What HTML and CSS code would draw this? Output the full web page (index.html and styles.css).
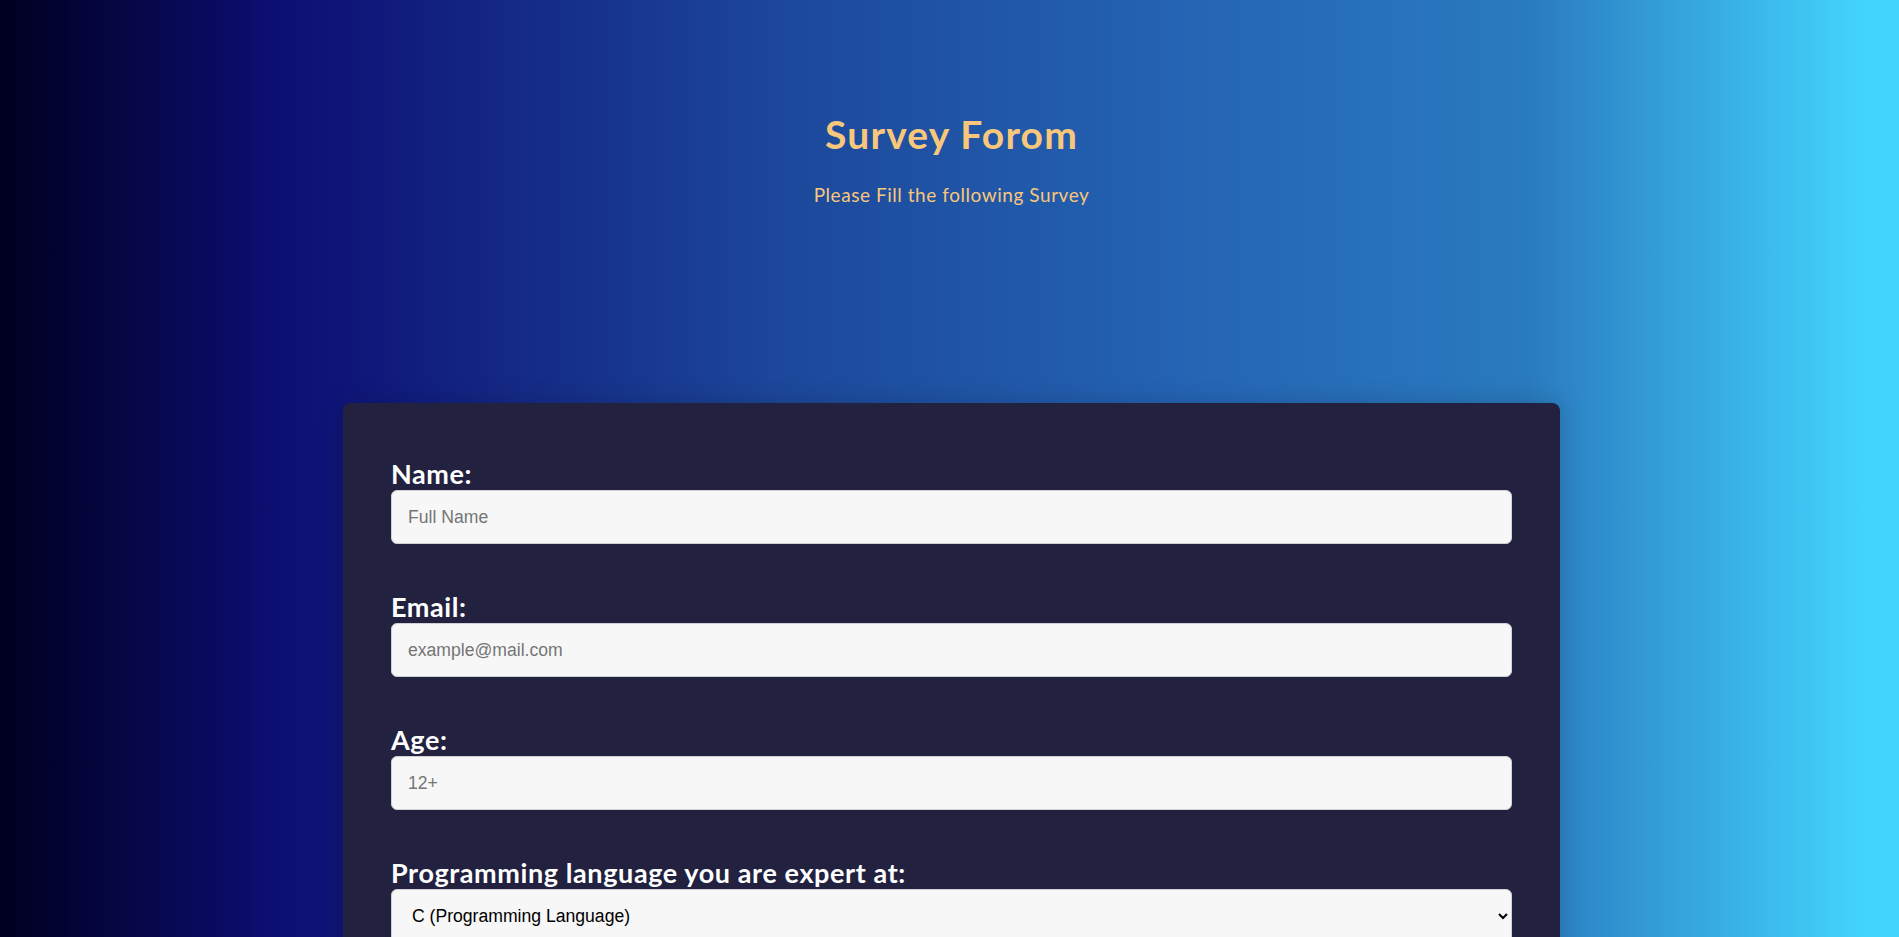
FILE: index.html
```html
<!DOCTYPE html>
<html lang="en">
<head>
<meta charset="utf-8">
<title>Survey Forom</title>
<link rel="stylesheet" href="styles.css">
</head>
<body>
<div class="page">
  <header class="header">
    <h1 class="title" id="title">Survey Forom</h1>
    <p class="description" id="description">Please Fill the following Survey</p>
  </header>
  <form class="card" id="survey-form">
    <div class="group">
      <label class="label" for="name">Name:</label>
      <input class="field" id="name" type="text" placeholder="Full Name">
    </div>
    <div class="group">
      <label class="label" for="email">Email:</label>
      <input class="field" id="email" type="email" placeholder="example@mail.com">
    </div>
    <div class="group">
      <label class="label" for="number">Age:</label>
      <input class="field" id="number" type="number" placeholder="12+">
    </div>
    <div class="group">
      <label class="label" for="dropdown">Programming language you are expert at:</label>
      <select class="field select" id="dropdown">
        <option>C (Programming Language)</option>
        <option>C++</option>
        <option>Java</option>
        <option>Python</option>
        <option>JavaScript</option>
      </select>
    </div>
  </form>
</div>
</body>
</html>
```

FILE: styles.css
```css
* {
  box-sizing: border-box;
}

html, body {
  margin: 0;
  padding: 0;
}

body {
  font-family: "Lato", "Open Sans", sans-serif;
  overflow: hidden;
}

.page {
  min-height: 937px;
  background: linear-gradient(to right, #000020 0%, #0d0e73 14.7%, #1c479a 40.8%, #2566b5 63.8%, #2a7abf 80.4%, #43d3fe 98%, #44d5ff 100%) fixed;
  padding: 111px 0 40px 4px;
}

.header {
  text-align: center;
  color: #f8c77b;
}

.title {
  margin: 0;
  font-size: 39px;
  line-height: 46px;
  font-weight: 700;
  letter-spacing: 1.2px;
}

.description {
  margin: 27px 0 0;
  font-size: 19px;
  line-height: 22px;
  letter-spacing: 0.55px;
}

.card {
  width: 1217px;
  margin: 197px auto 0;
  padding: 55px 48px 48px;
  background: #222240;
  border-radius: 8px;
  box-shadow: 0 0 24px rgba(0, 0, 0, 0.18);
}

.group {
  margin-bottom: 47px;
}

.label {
  display: block;
  color: #ffffff;
  font-size: 27px;
  line-height: 32px;
  font-weight: 700;
  letter-spacing: 0.6px;
}

.field {
  display: block;
  width: 100%;
  height: 54px;
  padding: 0 16px;
  background: #f7f7f7;
  border: 1px solid #cfcfd6;
  border-radius: 6px;
  font-family: "Liberation Sans", Arial, sans-serif;
  font-size: 17.6px;
  color: #000;
}

.field::placeholder {
  color: #757575;
}

.select {
  padding: 0 10px 0 16px;
}
```
